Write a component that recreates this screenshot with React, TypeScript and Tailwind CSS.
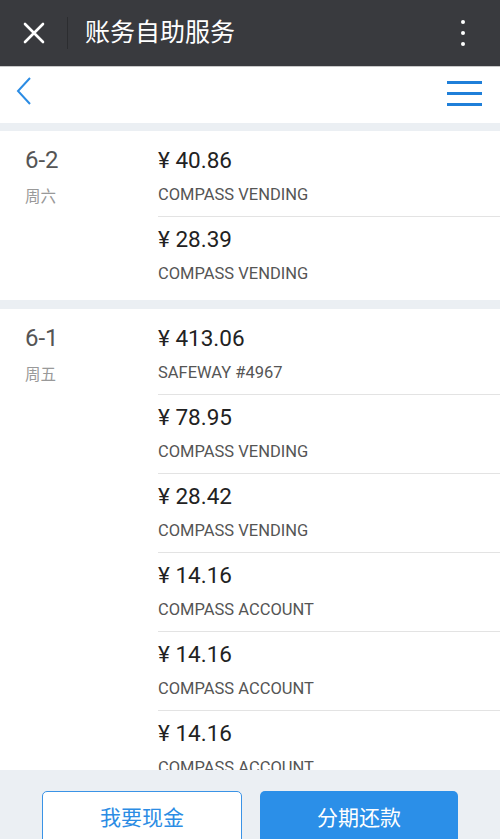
import React from "react";

type Txn = { amount: string; merchant: string };
type Day = { date: string; week: string; items: Txn[] };

const days: Day[] = [
  {
    date: "6-2",
    week: "周六",
    items: [
      { amount: "40.86", merchant: "COMPASS VENDING" },
      { amount: "28.39", merchant: "COMPASS VENDING" },
    ],
  },
  {
    date: "6-1",
    week: "周五",
    items: [
      { amount: "413.06", merchant: "SAFEWAY #4967" },
      { amount: "78.95", merchant: "COMPASS VENDING" },
      { amount: "28.42", merchant: "COMPASS VENDING" },
      { amount: "14.16", merchant: "COMPASS ACCOUNT" },
      { amount: "14.16", merchant: "COMPASS ACCOUNT" },
      { amount: "14.16", merchant: "COMPASS ACCOUNT" },
    ],
  },
];

const font = { fontFamily: '"Roboto", "Noto Sans CJK SC", sans-serif' };

function DayGroup({ day }: { day: Day }) {
  return (
    <div className="flex bg-white pt-[7px] pb-[5px]">
      {/* date column */}
      <div className="w-[158px] shrink-0 pl-[25px] pt-[4px]">
        <div className="h-[36px] leading-[36px] text-[24px] text-[#555]">{day.date}</div>
        <div className="h-[38px] leading-[38px] text-[15.5px] text-[#999]">{day.week}</div>
      </div>

      {/* transactions */}
      <div className="flex-1">
        {day.items.map((t, i) => (
          <div key={i}>
            <div className="pt-[4px] pb-[4px]">
              <div className="h-[36px] leading-[36px] text-[22.5px] text-[#222]">¥ {t.amount}</div>
              <div className="h-[34px] leading-[34px] text-[16.5px] text-[#555]">{t.merchant}</div>
            </div>
            {i < day.items.length - 1 && <div className="h-px bg-[#e3e3e3]" />}
          </div>
        ))}
      </div>
    </div>
  );
}

export default function App() {
  return (
    <div className="relative min-h-[839px] bg-[#ebeff3]" style={font}>
      {/* WeChat top bar */}
      <div className="flex h-[67px] items-center bg-[#393a3e] border-b border-[#c9c9c9]">
        <div className="flex w-[67px] justify-center">
          <svg width="22" height="22" viewBox="0 0 22 22" className="ml-[1px]">
            <path d="M2 2L20 20M20 2L2 20" stroke="#fff" strokeWidth="2.6" strokeLinecap="round" />
          </svg>
        </div>
        <div className="h-[32px] w-px bg-[#2c2d30]" />
        <div className="ml-[17px] flex-1 text-[25px] text-white">账务自助服务</div>
        <div className="mr-[35px] flex flex-col gap-[7px]">
          <span className="block h-[4px] w-[4px] rounded-full bg-white" />
          <span className="block h-[4px] w-[4px] rounded-full bg-white" />
          <span className="block h-[4px] w-[4px] rounded-full bg-white" />
        </div>
      </div>

      {/* page nav */}
      <div className="flex h-[56px] items-start justify-between bg-white pl-[16px] pr-[18px]">
        <svg width="16" height="28" viewBox="0 0 16 28" className="mt-[10px]">
          <path d="M14 1L2 14L14 27" stroke="#2b8ce4" strokeWidth="2" fill="none" />
        </svg>
        <div className="mt-[14px] flex flex-col gap-[8.5px]">
          <span className="block h-[2.5px] w-[35px] bg-[#1f7fd9]" />
          <span className="block h-[2.5px] w-[35px] bg-[#1f7fd9]" />
          <span className="block h-[2.5px] w-[35px] bg-[#1f7fd9]" />
        </div>
      </div>

      {/* list */}
      <div className="flex flex-col gap-[9px] pt-[8px] pb-[80px]">
        {days.map((d) => (
          <DayGroup key={d.date} day={d} />
        ))}
      </div>

      {/* bottom actions */}
      <div className="fixed bottom-0 left-0 right-0 h-[69px] bg-[#ebeff3] px-[42px] pt-[21px]">
        <div className="flex gap-[18px]">
          <button className="h-[56px] flex-1 rounded-[5px] border border-[#3a93e6] bg-white text-[21px] text-[#2b8ce4]">
            我要现金
          </button>
          <button className="h-[56px] flex-1 rounded-[5px] bg-[#2b8fe8] text-[21px] text-white">
            分期还款
          </button>
        </div>
      </div>
    </div>
  );
}
